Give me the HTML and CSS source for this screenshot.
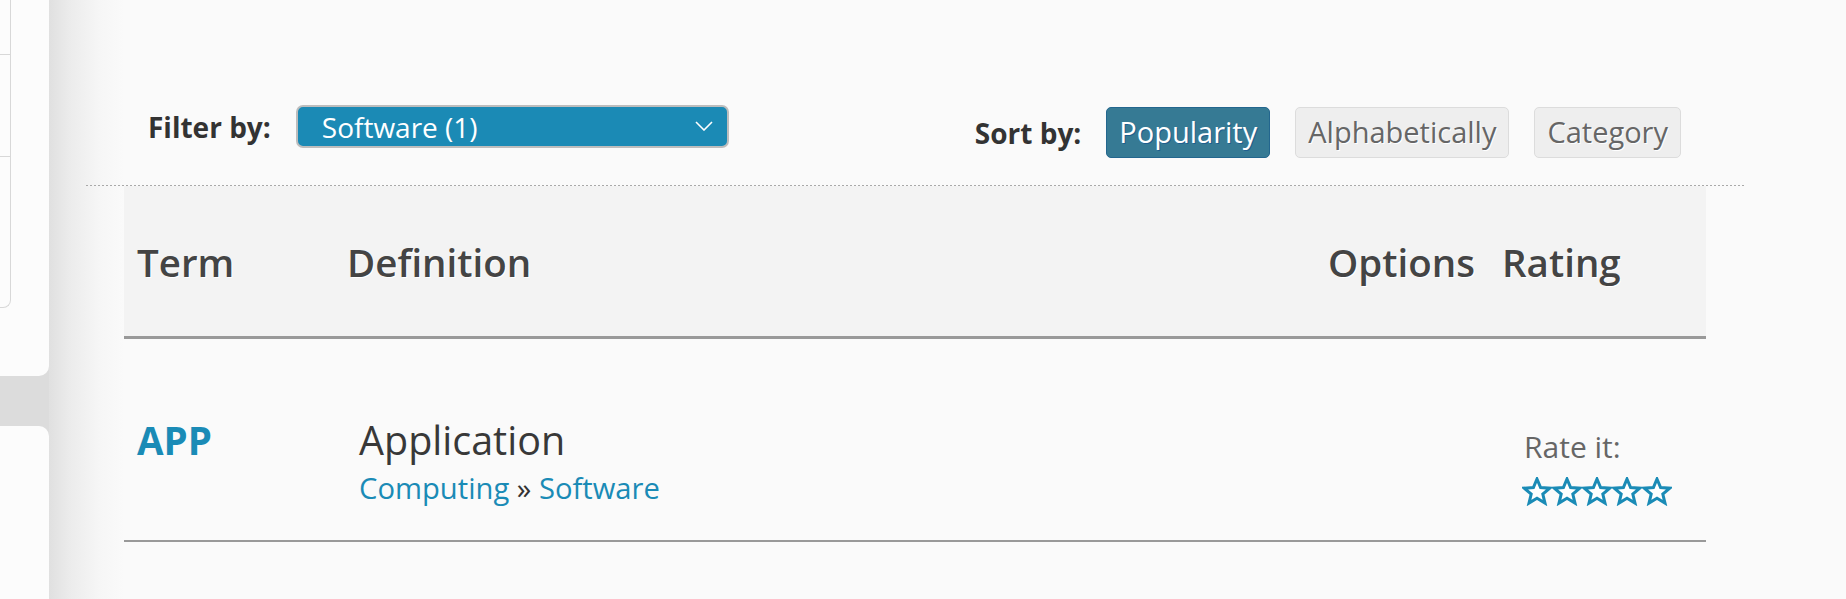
FILE: index.html
```html
<!DOCTYPE html>
<html>
<head>
<meta charset="utf-8">
<link rel="stylesheet" href="styles.css">
</head>
<body>
<div class="page">
  <aside class="sidebar">
    <div class="card card-top">
      <div class="inner">
        <div class="inner-row r1"></div>
        <div class="inner-row r2"></div>
        <div class="inner-row r3"></div>
      </div>
    </div>
    <div class="card card-bottom"></div>
  </aside>
  <main class="main">
    <div class="container">
      <div class="toolbar">
        <div class="filter">
          <span class="label">Filter by:</span>
          <div class="select">
            <span>Software (1)</span>
            <svg class="chev" width="18" height="10" viewBox="0 0 18 10"><polyline points="1,1 9,9 17,1" fill="none" stroke="#fff" stroke-width="1.6"/></svg>
          </div>
        </div>
        <div class="sort">
          <span class="label">Sort by:</span>
          <span class="btn active">Popularity</span>
          <span class="btn">Alphabetically</span>
          <span class="btn">Category</span>
        </div>
      </div>
      <div class="dots"></div>
      <div class="glossary">
        <div class="row head">
          <div class="cell">Term</div>
          <div class="cell">Definition</div>
          <div class="cell">Options</div>
          <div class="cell">Rating</div>
        </div>
        <div class="row entry">
          <div class="cell term"><a>APP</a></div>
          <div class="cell def">
            <div class="def-title">Application</div>
            <div class="crumbs"><a>Computing</a> » <a>Software</a></div>
          </div>
          <div class="cell opts"></div>
          <div class="cell rate">
            <div class="rate-label">Rate it:</div>
            <div class="stars">
              <svg viewBox="0 0 30 29" width="30" height="29"><polygon points="15,2 18.6,10.6 27.8,11.2 20.8,17.1 23,26.1 15,21.2 7,26.1 9.2,17.1 2.2,11.2 11.4,10.6" fill="#fff" stroke="#1a8bb6" stroke-width="3"/></svg>
              <svg viewBox="0 0 30 29" width="30" height="29"><polygon points="15,2 18.6,10.6 27.8,11.2 20.8,17.1 23,26.1 15,21.2 7,26.1 9.2,17.1 2.2,11.2 11.4,10.6" fill="#fff" stroke="#1a8bb6" stroke-width="3"/></svg>
              <svg viewBox="0 0 30 29" width="30" height="29"><polygon points="15,2 18.6,10.6 27.8,11.2 20.8,17.1 23,26.1 15,21.2 7,26.1 9.2,17.1 2.2,11.2 11.4,10.6" fill="#fff" stroke="#1a8bb6" stroke-width="3"/></svg>
              <svg viewBox="0 0 30 29" width="30" height="29"><polygon points="15,2 18.6,10.6 27.8,11.2 20.8,17.1 23,26.1 15,21.2 7,26.1 9.2,17.1 2.2,11.2 11.4,10.6" fill="#fff" stroke="#1a8bb6" stroke-width="3"/></svg>
              <svg viewBox="0 0 30 29" width="30" height="29"><polygon points="15,2 18.6,10.6 27.8,11.2 20.8,17.1 23,26.1 15,21.2 7,26.1 9.2,17.1 2.2,11.2 11.4,10.6" fill="#fff" stroke="#1a8bb6" stroke-width="3"/></svg>
            </div>
          </div>
        </div>
      </div>
    </div>
  </main>
</div>
</body>
</html>
```
FILE: styles.css
```css
html, body {
  margin: 0;
  padding: 0;
  height: 599px;
  overflow: hidden;
}
body {
  background: #fafafa;
  font-family: "Open Sans", "Noto Sans", sans-serif;
  font-size: 28px;
  color: #333;
}
.page {
  display: flex;
  height: 599px;
}
.sidebar {
  width: 49px;
  flex: none;
  display: flex;
  flex-direction: column;
  gap: 50px;
  background: #dcdcdc;
}
.card {
  background: #fcfcfc;
}
.card-top {
  height: 376px;
  border-bottom-right-radius: 10px;
}
.card-bottom {
  flex: 1;
  border-top-right-radius: 10px;
}
.inner {
  width: 10px;
  height: 307px;
  border-right: 1px solid #d8d8d8;
  border-bottom: 1px solid #d8d8d8;
  border-bottom-right-radius: 8px;
  display: flex;
  flex-direction: column;
}
.inner-row.r1 { height: 54px; border-bottom: 1px solid #d8d8d8; }
.inner-row.r2 { height: 101px; border-bottom: 1px solid #d8d8d8; }
.inner-row.r3 { flex: 1; }
.main {
  flex: 1;
  background: linear-gradient(to right, #e0e0e0 0, #ececec 22px, #f6f6f6 50px, #fafafa 75px);
}
.container {
  margin-left: 37px;
  width: 1659px;
}
.toolbar {
  display: flex;
  justify-content: space-between;
  align-items: flex-start;
  padding: 105px 64px 0 62px;
  height: 80px;
}
.dots {
  height: 1px;
  background: repeating-linear-gradient(to right, #a9a9a9 0, #a9a9a9 2px, transparent 2px, transparent 4px);
}
.filter, .sort {
  display: flex;
  align-items: center;
  gap: 25px;
}
.sort {
  margin-top: 2px;
}
.label {
  font-weight: 700;
  color: #333;
}
.select {
  box-sizing: border-box;
  width: 433px;
  height: 43px;
  border: 2px solid #bdbdbd;
  border-radius: 7px;
  background: #1b8ab5;
  color: #fff;
  display: flex;
  align-items: center;
  justify-content: space-between;
  padding: 0 12px 0 24px;
  line-height: 1;
}
.chev {
  margin-right: 2px;
  margin-top: -2px;
}
.btn {
  display: inline-flex;
  align-items: center;
  height: 51px;
  box-sizing: border-box;
  padding: 0 12px 2px;
  border: 1px solid #dcdcdc;
  border-radius: 5px;
  background: #eeeeee;
  color: #666;
  font-size: 29px;
  text-shadow: 1px 1px 0 #fff;
}
.btn.active {
  background: #367a94;
  border-color: #23668e;
  color: #fff;
  text-shadow: 1px 1px 0 #1f5f8f;
}
.glossary {
  margin: 0 39px 0 38px;
}
.row {
  display: grid;
  grid-template-columns: 210px 981px 174px 217px;
}
.row.head {
  height: 150px;
  background: #f3f3f3;
  border-bottom: 3px solid #999;
  align-items: center;
  font-size: 38.5px;
  font-weight: 600;
  color: #444;
  text-shadow: 1px 1px 0 #fff;
}
.row.head .cell {
  padding-left: 13px;
  padding-top: 2px;
}
.row.entry {
  height: 201px;
  border-bottom: 2px solid #999;
}
.cell.term {
  padding: 75px 0 0 13px;
  font-size: 38.5px;
  font-weight: 700;
  line-height: 52px;
}
a {
  color: #1a8bb6;
  text-decoration: none;
}
.cell.def {
  padding: 75px 0 0 25px;
}
.def-title {
  font-size: 39.5px;
  color: #383838;
  line-height: 52px;
}
.crumbs {
  margin-top: 2px;
  font-size: 29.2px;
  color: #333;
  line-height: 40px;
}
.cell.rate {
  padding: 88px 0 0 35px;
}
.rate-label {
  color: #666;
  font-size: 30px;
  line-height: 40px;
}
.stars {
  display: flex;
  margin-top: 10px;
  margin-left: -2px;
}
.stars svg {
  display: block;
}
```
